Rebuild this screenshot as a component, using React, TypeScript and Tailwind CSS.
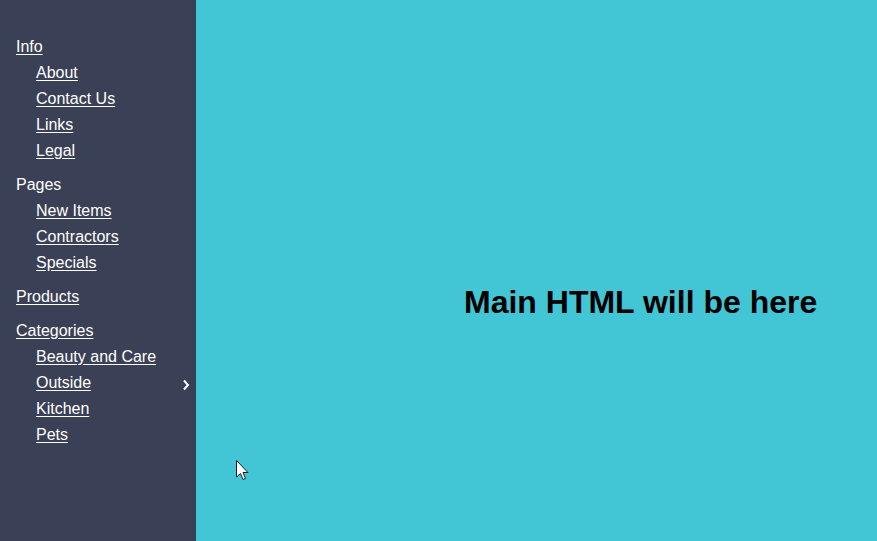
import React from 'react';

type Item = { label: string; link?: boolean; children?: { label: string; arrow?: boolean }[] };

const menu: Item[] = [
    {
        label: 'Info',
        link: true,
        children: [{ label: 'About' }, { label: 'Contact Us' }, { label: 'Links' }, { label: 'Legal' }],
    },
    {
        label: 'Pages',
        children: [{ label: 'New Items' }, { label: 'Contractors' }, { label: 'Specials' }],
    },
    { label: 'Products', link: true },
    {
        label: 'Categories',
        link: true,
        children: [
            { label: 'Beauty and Care' },
            { label: 'Outside', arrow: true },
            { label: 'Kitchen' },
            { label: 'Pets' },
        ],
    },
];

function Chevron() {
    return (
        <svg width="8" height="12" viewBox="0 0 8 12" className="mr-[6px] mt-[4px]">
            <path d="M2 1.5 L6 6 L2 10.5" fill="none" stroke="white" strokeWidth="2" />
        </svg>
    );
}

export default function App() {
    return (
        <div
            className="relative flex w-[877px] h-[541px] overflow-hidden text-[16px]"
            style={{ fontFamily: '"Liberation Sans", Arial, sans-serif' }}
        >
            {/* Sidebar */}
            <nav className="w-[196px] h-full bg-[#3a4055] text-white pt-[34px] flex flex-col gap-2">
                {menu.map((group) => (
                    <div key={group.label} className="flex flex-col">
                        <div className="h-[26px] leading-[26px] pl-4">
                            <span className={group.link ? 'underline underline-offset-2' : ''}>{group.label}</span>
                        </div>
                        {group.children?.map((c) => (
                            <div key={c.label} className="h-[26px] leading-[26px] pl-9 flex items-center justify-between">
                                <span className="underline underline-offset-2">{c.label}</span>
                                {c.arrow && <Chevron />}
                            </div>
                        ))}
                    </div>
                ))}
            </nav>

            {/* Main */}
            <main className="flex-1 h-full bg-[#42c5d4] pt-[284px] pl-[268px]">
                <h1 className="text-[32px] leading-[36px] font-bold text-black whitespace-nowrap">
                    Main HTML will be here
                </h1>
            </main>

            {/* Mouse pointer */}
            <svg
                width="14"
                height="22"
                viewBox="0 0 14 22"
                className="absolute left-[236px] top-[460px]"
            >
                <path
                    d="M0.5 0.5 L0.5 17 L4.5 13.5 L7 19.5 L9.5 18.5 L7 12.5 L12 12.5 Z"
                    fill="white"
                    stroke="#1a1a2e"
                    strokeWidth="1"
                />
            </svg>
        </div>
    );
}
